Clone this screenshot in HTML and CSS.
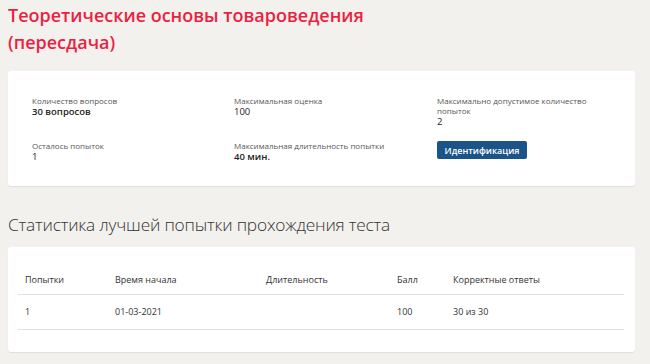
FILE: index.html
```html
<!DOCTYPE html>
<html lang="ru">
<head>
<meta charset="utf-8">
<link rel="stylesheet" href="styles.css">
</head>
<body>
<div class="page">
  <h1 class="title">Теоретические основы товароведения<br>(пересдача)</h1>
  <section class="card info">
    <div class="item">
      <div class="label">Количество вопросов</div>
      <div class="value strong">30 вопросов</div>
    </div>
    <div class="item">
      <div class="label">Максимальная оценка</div>
      <div class="value">100</div>
    </div>
    <div class="item narrow">
      <div class="label">Максимально допустимое количество попыток</div>
      <div class="value">2</div>
    </div>
    <div class="item">
      <div class="label">Осталось попыток</div>
      <div class="value">1</div>
    </div>
    <div class="item">
      <div class="label">Максимальная длительность попытки</div>
      <div class="value strong">40 мин.</div>
    </div>
    <div class="item">
      <button class="btn">Идентификация</button>
    </div>
  </section>
  <h2 class="subtitle">Статистика лучшей попытки прохождения теста</h2>
  <section class="card stats">
    <table class="table">
      <thead>
        <tr><th class="c1">Попытки</th><th class="c2">Время начала</th><th class="c3">Длительность</th><th class="c4">Балл</th><th>Корректные ответы</th></tr>
      </thead>
      <tbody>
        <tr><td>1</td><td>01-03-2021</td><td></td><td>100</td><td>30 из 30</td></tr>
      </tbody>
    </table>
  </section>
</div>
</body>
</html>
```
FILE: styles.css
```css
* { box-sizing: border-box; }
html, body { margin: 0; padding: 0; }
body {
  background: #f3f1ee;
  font-family: "Open Sans", "Noto Sans", sans-serif;
  color: #333;
  width: 650px;
  height: 364px;
  overflow: hidden;
}
.page { padding: 2px 15px 0 8px; }
.title {
  margin: 0;
  font-size: 18px;
  line-height: 27px;
  font-weight: 600;
  color: #ec1f41;
}
.card {
  background: #fff;
  border-radius: 3px;
  box-shadow: 0 1px 1px rgba(0,0,0,0.08);
}
.info {
  margin-top: 15px;
  height: 115px;
  padding: 25px 0 0 24px;
  display: grid;
  grid-template-columns: 202px 203px 180px;
  grid-template-rows: 45px 30px;
}
.narrow .label { width: 160px; }
.label {
  font-size: 8px;
  line-height: 10px;
  color: #555;
}
.value {
  font-size: 9.5px;
  line-height: 11px;
  color: #222;
}
.value.strong { font-weight: 600; }
.btn {
  display: block;
  width: 90px;
  height: 18px;
  border: 0;
  border-radius: 2px;
  background: #1b5489;
  color: #fff;
  font-family: "Open Sans", sans-serif;
  font-weight: 600;
  font-size: 9px;
  padding: 0;
}
.subtitle {
  margin: 28px 0 0 0;
  font-size: 17.3px;
  line-height: 22px;
  font-weight: 300;
  color: #333;
  letter-spacing: -0.2px;
}
.stats {
  margin-top: 11px;
  height: 105px;
  padding: 22px 11px 0 10px;
}
.table {
  width: 100%;
  border-collapse: collapse;
  font-size: 9px;
  color: #333;
}
.table th, .table td {
  text-align: left;
  font-weight: 400;
  padding: 0 0 0 7px;
  border-bottom: 1px solid #e1e0db;
}
.table th { height: 25px; padding-bottom: 3px; }
.table td { height: 35px; }
.c1 { width: 90px; }
.c2 { width: 151px; }
.c3 { width: 131px; }
.c4 { width: 56px; }
```
